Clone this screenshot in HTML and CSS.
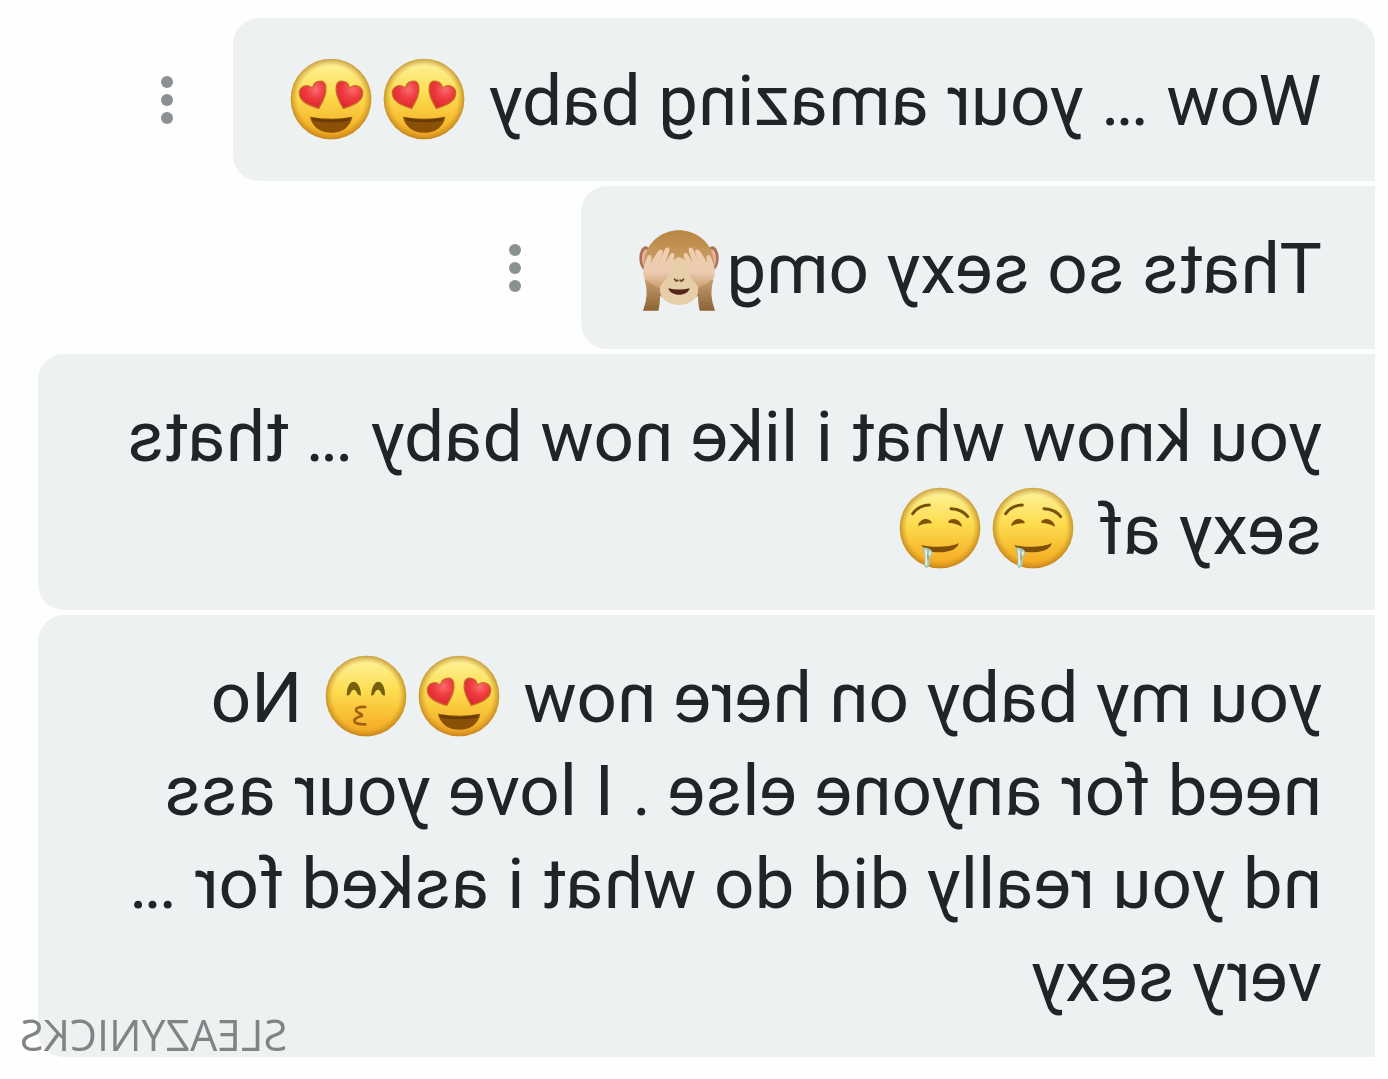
FILE: index.html
```
<!DOCTYPE html>
<html lang="en">
<head>
  <meta charset="UTF-8">
  <meta name="viewport" content="width=device-width, initial-scale=1.0">
  <title>Messages</title>
  <link rel="stylesheet" href="styles.css">
</head>
<body>
  <!-- Emoji shapes, reused in the messages below -->
  <svg class="sprites" aria-hidden="true">
    <defs>
      <linearGradient id="skin" x1="0" y1="0" x2="0" y2="1">
        <stop offset="0" stop-color="#fdf5a0"></stop>
        <stop offset="0.45" stop-color="#fddc4e"></stop>
        <stop offset="1" stop-color="#f3a51d"></stop>
      </linearGradient>
      <radialGradient id="edge">
        <stop offset="0.82" stop-color="#c88a20" stop-opacity="0"></stop>
        <stop offset="1" stop-color="#b0781f" stop-opacity="0.7"></stop>
      </radialGradient>
      <radialGradient id="heart" cx="0.4" cy="0.3" r="0.7">
        <stop offset="0" stop-color="#fb6c70"></stop>
        <stop offset="0.5" stop-color="#ee3b3f"></stop>
        <stop offset="1" stop-color="#dd2630"></stop>
      </radialGradient>
      <linearGradient id="fur" x1="0" y1="0" x2="0" y2="1">
        <stop offset="0" stop-color="#b98542"></stop>
        <stop offset="0.5" stop-color="#cba169"></stop>
        <stop offset="1" stop-color="#aa7c45"></stop>
      </linearGradient>
      <linearGradient id="arm" x1="0" y1="0" x2="0" y2="1">
        <stop offset="0" stop-color="#c79e6f"></stop>
        <stop offset="1" stop-color="#8c6335"></stop>
      </linearGradient>
      <linearGradient id="hand" x1="0" y1="0" x2="0" y2="1">
        <stop offset="0" stop-color="#efcfae"></stop>
        <stop offset="0.6" stop-color="#edcbb0"></stop>
        <stop offset="1" stop-color="#c99e6e"></stop>
      </linearGradient>
    </defs>

    <symbol id="face" viewBox="0 0 246 246">
      <circle cx="123" cy="123" r="121" fill="url(#skin)"></circle>
      <circle cx="123" cy="123" r="121" fill="url(#edge)"></circle>
    </symbol>

    <symbol id="heart-eyes" viewBox="0 0 246 246">
      <use href="#face"></use>
      <g fill="url(#heart)" stroke="#c9662a" stroke-width="4">
        <path d="M86 151C60 143 28 132 28 106C28 84 54 76 67 91C72 66 102 62 107 84C111 106 98 132 86 151Z"></path>
        <path d="M160 151C186 143 218 132 218 106C218 84 192 76 179 91C174 66 144 62 139 84C135 106 148 132 160 151Z"></path>
      </g>
      <path d="M59 176Q122 188 186 176C180 207 155 224 122 224C89 224 65 207 59 176Z" fill="#895006"></path>
      <path d="M65 179Q122 191 180 179L176 188Q122 198 69 188Z" fill="#6a3b08"></path>
    </symbol>

    <symbol id="drool" viewBox="0 0 246 246">
      <use href="#face"></use>
      <g fill="none" stroke="#775108" stroke-width="9" stroke-linecap="round">
        <path d="M205 80Q186 54 155 54"></path>
        <path d="M90 65Q58 66 40 89"></path>
      </g>
      <path d="M148 105C160 88 186 96 189 117Q170 107 148 109Z" fill="#805109"></path>
      <path d="M98 103C86 88 60 98 57 119Q76 108 98 107Z" fill="#805109"></path>
      <path d="M178 174C155 182 90 182 67 168C69 184 92 196 125 196C151 196 173 192 178 174Z" fill="#805006"></path>
      <path d="M174 181C156 183 145 188 146 202C147 212 158 204 154 222C151 246 174 250 170 229C166 216 174 200 174 181Z" fill="#a9c5b6"></path>
      <path d="M166 188C164 205 163 215 164 235M152 193L155 205" fill="none" stroke="#edf5e7" stroke-width="5"></path>
      <path d="M160 202L159 218" stroke="#809b77" stroke-width="3"></path>
    </symbol>

    <symbol id="kiss" viewBox="0 0 246 246">
      <use href="#face"></use>
      <g fill="#76600e">
        <path d="M66 121C66 68 104 65 108 121C97 125 98 104 87 104C77 104 78 125 66 121Z"></path>
        <path d="M138 121C140 68 180 65 181 121C169 125 170 104 160 104C150 104 150 125 138 121Z"></path>
      </g>
      <path d="M125 156C143 154 157 159 152 168C149 174 130 178 136 183C146 185 162 191 157 201C152 208 138 208 125 208" fill="none" stroke="#a45d11" stroke-width="8" stroke-linecap="round"></path>
    </symbol>

    <symbol id="monkey" viewBox="0 0 240 246">
      <ellipse cx="20" cy="88" rx="19" ry="36" fill="#a87550"></ellipse>
      <ellipse cx="220" cy="88" rx="19" ry="36" fill="#a87550"></ellipse>
      <ellipse cx="22" cy="89" rx="13" ry="28" fill="#eeb0a4"></ellipse>
      <ellipse cx="218" cy="89" rx="13" ry="28" fill="#eeb0a4"></ellipse>
      <path d="M14 112C14 44 66 4 120 4S226 44 226 112C226 160 192 216 120 216S14 160 14 112Z" fill="url(#fur)"></path>
      <path d="M120 84C97 88 86 118 72 148C46 196 76 227 120 228C164 227 194 196 168 148C154 118 143 88 120 84Z" fill="#e6cfa8"></path>
      <path d="M16 150Q32 194 12 245H58Q66 215 62 172Z" fill="url(#arm)"></path>
      <path d="M224 150Q208 194 228 245H182Q174 215 178 172Z" fill="url(#arm)"></path>
      <g fill="url(#hand)">
        <path d="M18 150C8 135 13 114 23 87C27 76 37 75 38 87L35 102L56 68C63 57 74 61 71 72L60 102L77 62C82 51 95 55 90 68L78 105L92 79C99 67 109 72 105 84C99 104 96 127 87 143C78 156 68 160 62 178Q40 168 18 150Z"></path>
        <path d="M222 150C232 135 227 114 217 87C213 76 203 75 202 87L205 102L184 68C177 57 166 61 169 72L180 102L163 62C158 51 145 55 150 68L162 105L148 79C141 67 131 72 135 84C141 104 144 127 153 143C162 156 172 160 178 178Q200 168 222 150Z"></path>
      </g>
      <path d="M107 151Q112 159 116 154M124 154Q128 159 133 151" fill="none" stroke="#75492d" stroke-width="6" stroke-linecap="round"></path>
      <path d="M88 178Q120 185 152 178C147 204 93 204 88 178Z" fill="#54261a"></path>
    </symbol>
  </svg>

  <main class="mirror">
    <ul class="thread">
      <li class="row">
        <p class="bubble">Wow … your amazing baby <svg class="emoji" role="img" aria-label="heart eyes"><use href="#heart-eyes"></use></svg><svg class="emoji" role="img" aria-label="heart eyes"><use href="#heart-eyes"></use></svg></p>
        <button class="more" type="button" aria-label="More options"><span></span><span></span><span></span></button>
      </li>
      <li class="row">
        <p class="bubble">Thats so sexy omg<svg class="emoji emoji-low" role="img" aria-label="see no evil"><use href="#monkey"></use></svg></p>
        <button class="more" type="button" aria-label="More options"><span></span><span></span><span></span></button>
      </li>
      <li class="row">
        <p class="bubble">you know what i like now baby … thats sexy af <svg class="emoji" role="img" aria-label="drooling"><use href="#drool"></use></svg><svg class="emoji" role="img" aria-label="drooling"><use href="#drool"></use></svg></p>
      </li>
      <li class="row">
        <p class="bubble">you my baby on here now <svg class="emoji" role="img" aria-label="heart eyes"><use href="#heart-eyes"></use></svg><svg class="emoji" role="img" aria-label="kissing"><use href="#kiss"></use></svg> No need for anyone else . I love your ass nd you really did do what i asked for … very sexy</p>
      </li>
    </ul>
    <div class="watermark">SLEAZYNICKS</div>
  </main>
</body>
</html>
```
FILE: styles.css
```
* {
  margin: 0;
  padding: 0;
  box-sizing: border-box;
}

body {
  background-color: #fefefe;
  color: #202426;
  font-family: Roboto, sans-serif;
  overflow-x: hidden;
}

.sprites {
  position: absolute;
  width: 0;
  height: 0;
}

/* The whole conversation reads right to left, flipped */
.mirror {
  position: relative;
  padding: 18px 38px 20px 13px;
  transform: scaleX(-1);
}

.thread {
  display: flex;
  flex-direction: column;
  gap: 5px;
  list-style: none;
}

.row {
  display: flex;
  align-items: center;
  gap: 54px;
}

.bubble {
  padding: 36px 52px 34px 53px;
  background-color: #eef1f2;
  border-radius: 0 26px 26px 0;
  font-size: 71px;
  line-height: 93px;
}

.row:first-child .bubble {
  border-top-left-radius: 26px;
}

/* Emoji */
.emoji {
  width: 82px;
  height: 82px;
  margin: 0 5px 0 6px;
  vertical-align: -15px;
}

.emoji-low {
  vertical-align: -18px;
}

.more {
  display: flex;
  flex-direction: column;
  align-items: center;
  gap: 6px;
  width: 24px;
  border: none;
  background: none;
  cursor: pointer;
}

.more span {
  width: 12px;
  height: 12px;
  border-radius: 50%;
  background-color: #8b9092;
}

.watermark {
  position: absolute;
  right: 20px;
  bottom: 14px;
  color: #808485;
  font-family: "Open Sans", sans-serif;
  font-size: 43px;
  line-height: 56px;
}
```
